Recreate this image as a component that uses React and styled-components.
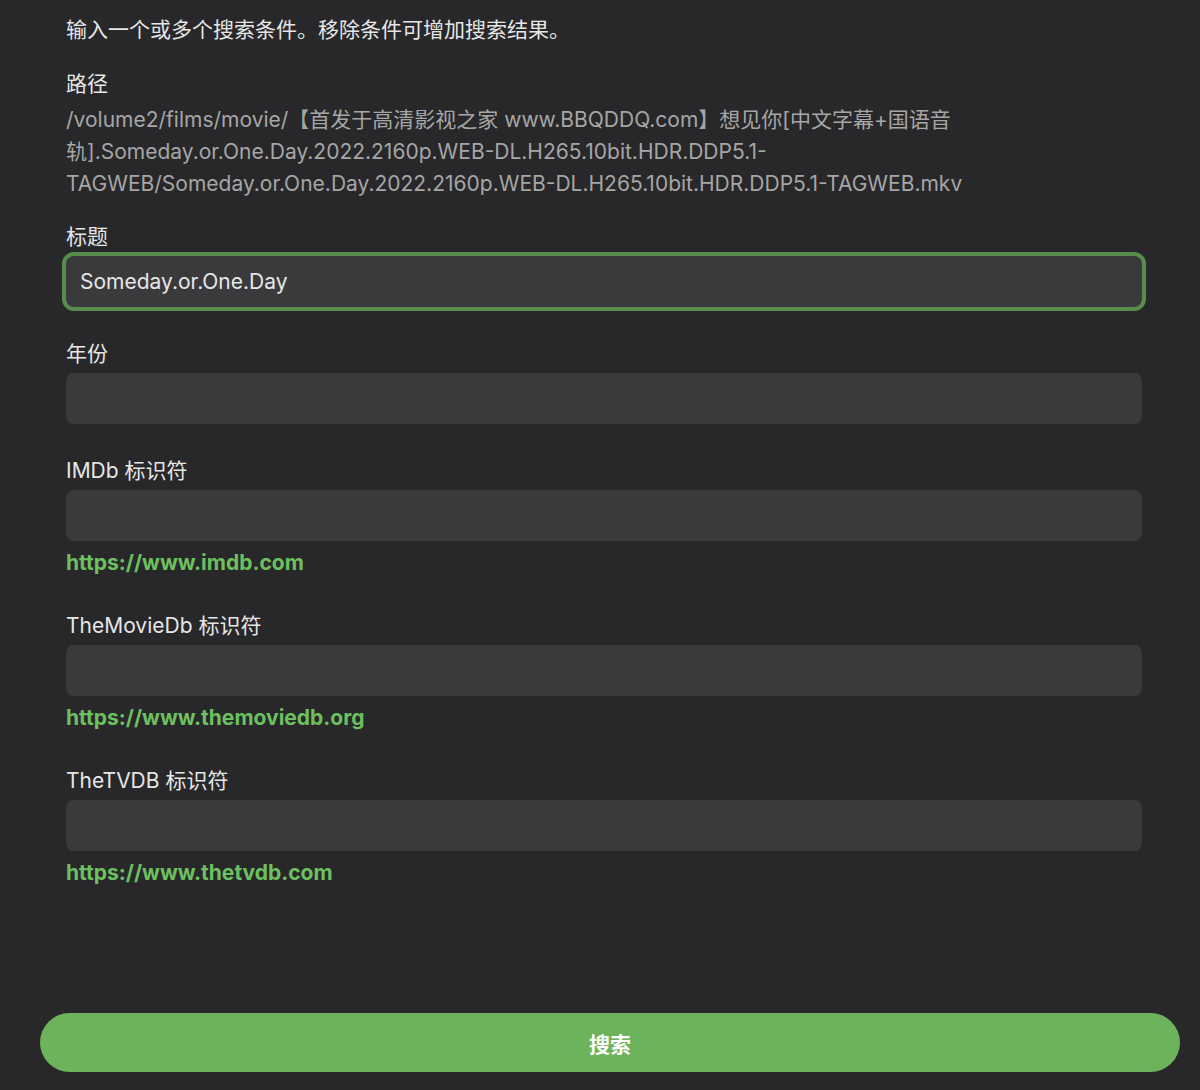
import React, { useState } from "react";
import styled, { createGlobalStyle } from "styled-components";

const GlobalStyle = createGlobalStyle`
  html, body {
    margin: 0;
    padding: 0;
    background: #28282a;
  }
  * {
    box-sizing: border-box;
  }
`;

const Page = styled.div`
  display: flex;
  flex-direction: column;
  min-height: 1090px;
  background: #28282a;
  font-family: "Inter", "Noto Sans CJK SC", sans-serif;
  color: #e6e6e6;
`;

const Form = styled.div`
  display: flex;
  flex-direction: column;
  width: 1076px;
  margin-left: 66px;
  padding-top: 16px;
`;

const Intro = styled.p`
  margin: 0 0 26px;
  font-size: 21px;
  line-height: 28px;
`;

const Field = styled.div`
  display: flex;
  flex-direction: column;
  margin-bottom: ${(p) => p.$gap}px;
`;

const Label = styled.label`
  font-size: 21px;
  line-height: 28px;
  color: #e6e6e6;
`;

const PathText = styled.div`
  margin-top: 6px;
  font-size: 21px;
  line-height: 32px;
  color: #a6a6a6;
`;

const Input = styled.input`
  height: 51px;
  margin-top: 5px;
  padding: 0 14px;
  border: none;
  border-radius: 8px;
  background: #3a3a3c;
  color: #e6e6e6;
  font-family: inherit;
  font-size: 21px;
  outline: none;
  box-shadow: ${(p) => (p.$focused ? "0 0 0 4px #578e4c" : "none")};
`;

const Link = styled.a`
  margin-top: 8px;
  font-size: 21px;
  line-height: 28px;
  font-weight: 700;
  color: #6dc05f;
  text-decoration: none;
  align-self: flex-start;
`;

const Footer = styled.div`
  margin-top: auto;
  padding: 0 20px 18px 40px;
`;

const SearchButton = styled.button`
  width: 1140px;
  height: 59px;
  border: none;
  border-radius: 30px;
  background: #6cb35c;
  color: #ffffff;
  font-family: inherit;
  font-size: 21px;
  font-weight: 700;
  cursor: pointer;
`;

const fields = [
  { key: "year", label: "年份", gap: 33 },
  { key: "imdb", label: "IMDb 标识符", link: "https://www.imdb.com", gap: 35 },
  { key: "tmdb", label: "TheMovieDb 标识符", link: "https://www.themoviedb.org", gap: 35 },
  { key: "tvdb", label: "TheTVDB 标识符", link: "https://www.thetvdb.com", gap: 0 },
];

const App = () => {
  const [values, setValues] = useState({ title: "Someday.or.One.Day" });

  const update = (key) => (e) => setValues({ ...values, [key]: e.target.value });

  return (
    <Page>
      <GlobalStyle />
      <Form>
        <Intro>输入一个或多个搜索条件。移除条件可增加搜索结果。</Intro>

        <Field $gap={23}>
          <Label>路径</Label>
          <PathText>
            /volume2/films/movie/【首发于高清影视之家 www.BBQDDQ.com】想见你[中文字幕+国语音轨].Someday.or.One.Day.2022.2160p.WEB-DL.H265.10bit.HDR.DDP5.1-TAGWEB/Someday.or.One.Day.2022.2160p.WEB-DL.H265.10bit.HDR.DDP5.1-TAGWEB.mkv
          </PathText>
        </Field>

        <Field $gap={33}>
          <Label>标题</Label>
          <Input $focused value={values.title || ""} onChange={update("title")} />
        </Field>

        {fields.map((f) => (
          <Field key={f.key} $gap={f.gap}>
            <Label>{f.label}</Label>
            <Input value={values[f.key] || ""} onChange={update(f.key)} />
            {f.link && <Link href={f.link}>{f.link}</Link>}
          </Field>
        ))}
      </Form>

      <Footer>
        <SearchButton>搜索</SearchButton>
      </Footer>
    </Page>
  );
};

export default App;
